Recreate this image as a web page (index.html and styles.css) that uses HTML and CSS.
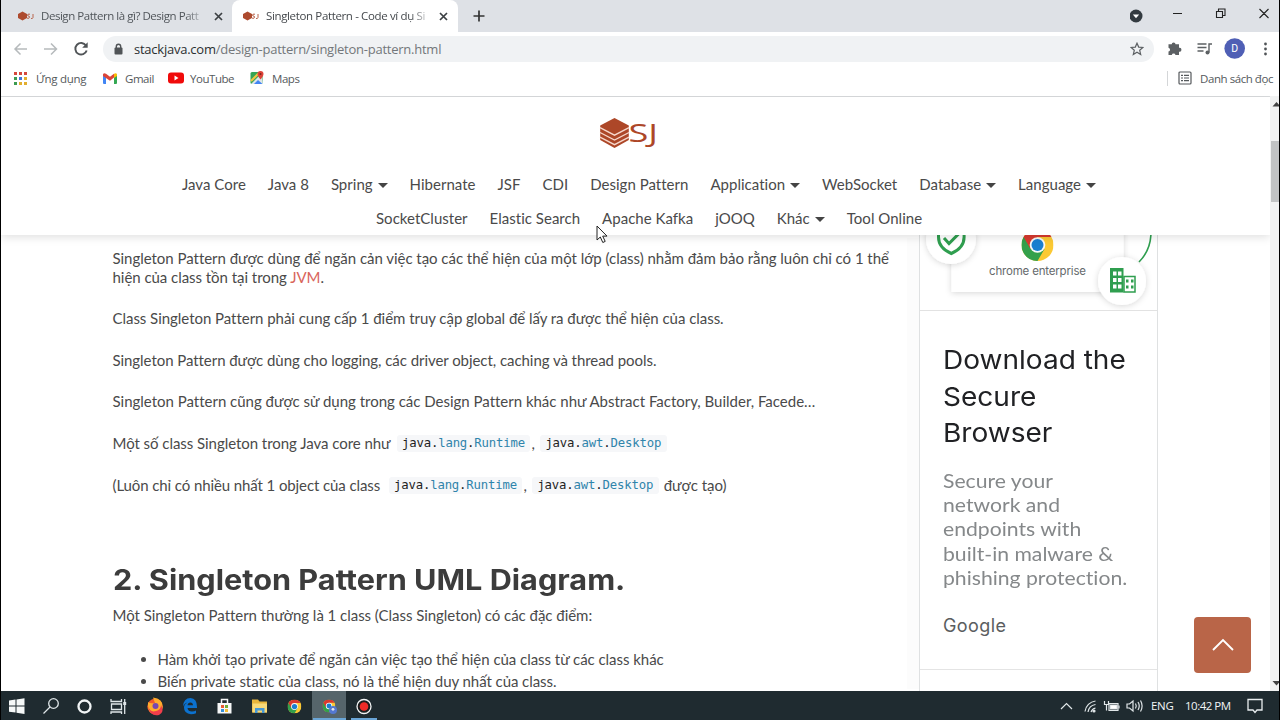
FILE: index.html
```html
<!DOCTYPE html>
<html lang="vi">
<head>
<meta charset="utf-8">
<title>Singleton Pattern - Code ví dụ Singleton</title>
<link rel="stylesheet" href="styles.css">
</head>
<body>
<svg width="0" height="0" class="defs">
  <symbol id="chrome" viewBox="0 0 32 32">
    <circle cx="16" cy="16" r="16" fill="#fbc934"/>
    <path d="M2.1 8A16 16 0 0 0 16 32l7-12-7-4z" fill="#34a04b"/>
    <path d="M2.1 8A16 16 0 0 1 29.9 8H16l-7 12z" fill="#d93a2f"/>
    <circle cx="16" cy="16" r="7.8" fill="#f6f8f8"/><circle cx="16" cy="16" r="6" fill="#1a7fd0"/>
  </symbol>
  <symbol id="fav" viewBox="0 0 16 10">
    <path d="M4.500 0.500L9 3v4L4.500 9.500 0 7V3z" fill="#ad4a2e"/>
    <path d="M12 3.200H10q-1.200 1 0 1.800h1q1.200 1.200 0 2.200H9M15 3v3.500q0 1.200-2 1" fill="none" stroke="#b8654d"/>
  </symbol>
</svg>
<div class="screen">
  <div class="tabs">
    <div class="tab">
      <svg class="fav" width="16" height="10"><use href="#fav"/></svg>
      <span class="tab-title title-a">Design Pattern là gì? Design Patt</span>
      <svg class="close" width="9" height="9" viewBox="0 0 9 9"><path d="M1 1l7 7M8 1L1 8"/></svg>
    </div>
    <div class="tab active">
      <svg class="fav" width="16" height="10"><use href="#fav"/></svg>
      <span class="tab-title title-b">Singleton Pattern - Code ví dụ Si</span>
      <svg class="close" width="9" height="9" viewBox="0 0 9 9"><path d="M1 1l7 7M8 1L1 8"/></svg>
    </div>
    <svg class="plus" width="12" height="12" viewBox="0 0 12 12"><path d="M6 0.500v11M0.500 6h11" stroke="#333" stroke-width="1.700"/></svg>
    <svg class="winctl" width="150" height="32" viewBox="1130 0 150 32" fill="none" stroke="#222" stroke-width="1.100">
      <circle cx="1136" cy="16" r="6.500" fill="#333a40" stroke="none"/><path d="M1132.800 14.500h6.400l-3.200 3.700z" fill="#fff" stroke="none"/>
      <path d="M1173 13.500h9M1216.500 11.500h6v6h-6zM1218.500 11v-2h6.500v6.500h-2M1259.500 9l9 9M1268.500 9l-9 9"/>
    </svg>
  </div>
  <div class="toolbar">
    <svg class="navbtns" width="90" height="34" viewBox="0 32 90 34" fill="none" stroke-width="1.500">
      <path d="M27 49H15.500M20.500 43.500L15 49l5.500 5.500M44 49h12M51 43.500l5.500 5.500-5.500 5.500" stroke="#b6babc"/>
      <path d="M86 45.500A5.800 5.800 0 1 0 86.700 50.500" stroke="#505457" stroke-width="1.900"/><path d="M87.700 42.300v5.500h-5.500z" fill="#505457"/>
    </svg>
    <div class="omnibox">
      <svg width="9" height="12" viewBox="0 0 9 12"><path d="M2.300 5V3.500a2.200 2.200 0 0 1 4.400 0V5" fill="none" stroke="#505457" stroke-width="1.400"/><rect x="0.500" y="4.500" width="8" height="7" rx="1" fill="#505457"/></svg>
      <span class="url"><b>stackjava.com</b>/design-pattern/singleton-pattern.html</span>
      <svg class="star" width="14" height="14" viewBox="0 0 14 14"><path d="M7 1.200l1.700 3.900 4.200.4-3.200 2.800 1 4.200L7 10.300l-3.700 2.200 1-4.200L1.100 5.500l4.200-.4z" fill="none" stroke="#5c6063" stroke-width="1.200"/></svg>
    </div>
    <svg class="exts" width="110" height="34" viewBox="1160 32 110 34">
      <path d="M1168.500 45.300h3.200a1.900 1.900 0 1 1 3.800 0h3.500v3.500a2 2 0 1 1 0 3.900v3.300h-3.500a1.900 1.900 0 0 0-3.700 0h-3.300v-3.400a2 2 0 0 0 0-3.900z" transform="translate(0 -1)" fill="#5c6063"/>
      <path d="M1197.500 44h9M1197.500 47.500h9M1197.500 51h6M1209 52.500v-8.500h3" fill="none" stroke="#5c6063" stroke-width="1.400"/><circle cx="1207.500" cy="52.500" r="2" fill="#5c6063"/>
      <circle cx="1234.700" cy="48.500" r="10.300" fill="#4f5fb5"/><text x="1231.300" y="52.300" font-size="10.500" fill="#fff" class="sans">D</text>
      <g fill="#505457"><circle cx="1265.500" cy="44" r="1.400"/><circle cx="1265.500" cy="49" r="1.400"/><circle cx="1265.500" cy="54" r="1.400"/></g>
    </svg>
  </div>
  <div class="bookmarks">
    <svg width="13" height="13" viewBox="0 0 13 13"><path d="M0 1.500h3m2 0h3m2 0h3" stroke="#d5483c" stroke-width="3"/><path d="M0 6.500h3" stroke="#3c9b50" stroke-width="3"/><path d="M5 6.500h3" stroke="#4274d8" stroke-width="3"/><path d="M10 6.500h3" stroke="#e2ae2f" stroke-width="3"/><path d="M0 11.500h3" stroke="#3c9b50" stroke-width="3"/><path d="M5 11.500h3m2 0h3" stroke="#e2ae2f" stroke-width="3"/></svg>
    <span class="bm b1">Ứng dụng</span>
    <svg width="14" height="11" viewBox="0 0 14 11"><path d="M0 1.500h3V11H1q-1 0-1-1z" fill="#4285f4"/><path d="M11 1.500h3V10q0 1-1 1h-2z" fill="#34a853"/><path d="M0 3V1.500Q.7-.7 3 .8l4 3 4-3V4.500L7 7.700 0 3z" fill="#dc4437"/><path d="M11 .8q2.500-1.400 3 .7V3l-3 2z" fill="#fbbc04"/></svg>
    <span class="bm b2">Gmail</span>
    <svg width="16" height="12" viewBox="0 0 16 12"><rect y="0.500" width="16" height="11" rx="3" fill="#f00a0a"/><path d="M6.500 3.500v5l4-2.500z" fill="#fff"/></svg>
    <span class="bm b3">YouTube</span>
    <svg width="14" height="14" viewBox="0 0 14 14"><rect x="0.500" y="1" width="12" height="12" rx="1.500" fill="#36a456"/><path d="M1 13L11 3l1.500 8v2z" fill="#dfe5e8"/><path d="M4 13l4-4 4.500 4z" fill="#4285f4"/><path d="M1 10L9 2" stroke="#f4c542" stroke-width="2"/><path d="M10.500 0a3 3 0 0 1 3 3q0 2-3 5.500-3-3.500-3-5.500a3 3 0 0 1 3-3z" fill="#dd4338"/><circle cx="10.500" cy="3" r="1" fill="#7b221d"/></svg>
    <span class="bm b4">Maps</span>
    <div class="reading">
      <svg width="14" height="14" viewBox="0 0 14 14" fill="none" stroke="#55595c" stroke-width="1.200"><rect x="1" y="1" width="12" height="12" rx="1"/><path d="M3 4.300h2m1 0h5M3 7h2m1 0h5M3 9.700h2m1 0h5"/></svg>
      <span class="bm b5">Danh sách đọc</span>
    </div>
  </div>

  <div class="viewport">
    <div class="page">
      <header>
        <svg class="logo" width="64" height="34" viewBox="598 116 64 34">
          <path d="M613.500 118l14.300 7.500v14.500L613.500 148l-14.300-8v-14.500z" fill="#ad4728"/>
          <path d="M599 127.700l14.500 7.500 14.500-7.500M599 132.500l14.500 7.500 14.500-7.500M599 137.200l14.500 7.500 14.500-7.500" fill="none" stroke="#f7d8cc" stroke-width="1.300"/>
          <text x="627.500" y="142" textLength="29.500" lengthAdjust="spacingAndGlyphs" class="logotext">SJ</text>
        </svg>
        <nav>
          <div class="navrow r1"><a>Java Core</a><a>Java 8</a><a class="dd">Spring</a><a>Hibernate</a><a>JSF</a><a>CDI</a><a>Design Pattern</a><a class="dd">Application</a><a>WebSocket</a><a class="dd">Database</a><a class="dd">Language</a></div>
          <div class="navrow r2"><a>SocketCluster</a><a>Elastic Search</a><a>Apache Kafka</a><a>jOOQ</a><a class="dd">Khác</a><a>Tool Online</a></div>
        </nav>
      </header>
      <div class="body">
        <article>
          <p><span class="l1">Singleton Pattern được dùng để ngăn cản việc tạo các thể hiện của một lớp (class) nhằm đảm bảo rằng luôn chỉ có 1 thể</span><br><span class="l2">hiện của class tồn tại trong <a class="link">JVM</a>.</span></p>
          <p class="l3">Class Singleton Pattern phải cung cấp 1 điểm truy cập global để lấy ra được thể hiện của class.</p>
          <p class="l4">Singleton Pattern được dùng cho logging, các driver object, caching và thread pools.</p>
          <p class="l5">Singleton Pattern cũng được sử dụng trong các Design Pattern khác như Abstract Factory, Builder, Facede…</p>
          <p class="codeline"><span class="l6">Một số class Singleton trong Java core như</span><code>java.<i>lang</i>.<i>Runtime</i></code><span class="comma">,</span><code>java.<i>awt</i>.<i>Desktop</i></code></p>
          <p class="codeline second"><span class="l7">(Luôn chỉ có nhiều nhất 1 object của class</span><code>java.<i>lang</i>.<i>Runtime</i></code><span class="comma">,</span><code>java.<i>awt</i>.<i>Desktop</i></code><span class="l8">được tạo)</span></p>
          <h2>2. Singleton Pattern UML Diagram.</h2>
          <p class="intro">Một Singleton Pattern thường là 1 class (Class Singleton) có các đặc điểm:</p>
          <ul>
            <li class="l9">Hàm khởi tạo private để ngăn cản việc tạo thể hiện của class từ các class khác</li>
            <li class="l10">Biến private static của class, nó là thể hiện duy nhất của class.</li>
          </ul>
        </article>
        <aside>
          <svg class="adpic" width="237" height="75" viewBox="920 235 237 75">
            <defs><filter id="sh" x="-20%" y="-30%" width="140%" height="160%"><feDropShadow dx="0" dy="1" stdDeviation="3" flood-color="#000" flood-opacity=".16"/></filter></defs>
            <rect x="951.500" y="200" width="172" height="92" fill="#fff" filter="url(#sh)"/>
            <circle cx="951" cy="239" r="25" fill="#fff" filter="url(#sh)"/>
            <path d="M938.500 228v9q0 11 12.800 16.500 12.800-5.500 12.800-16.500v-9" fill="none" stroke="#2f9e4f" stroke-width="3"/>
            <path d="M944 238l5 5.500 10-10" fill="none" stroke="#2f9e4f" stroke-width="3"/>
            <svg x="1021.500" y="229" width="32" height="32"><use href="#chrome"/></svg>
            <text x="989" y="274.500" textLength="97" class="ent">chrome enterprise</text>
            <path d="M1151 232q0 18-12 30" fill="none" stroke="#2f9e4f" stroke-width="1.600"/>
            <circle cx="1122" cy="281" r="24" fill="#fff" filter="url(#sh)"/>
            <path d="M1110 268h13.500v24.500H1110z" fill="#2f9e4f"/><path d="M1124 276.500h11v15.500h-11z" fill="#fff" stroke="#2f9e4f" stroke-width="1.500"/>
            <path d="M1113 271.500h3.500v4H1113zm5 0h3.500v4H1118zM1113 278h3.500v4H1113zm5 0h3.500v4H1118zM1113 284.500h3.500v4H1113zm5 0h3.500v4H1118z" fill="#fff"/>
            <path d="M1126 279.500h2.500v3H1126zm5 0h2.500v3H1131zM1126 285.500h2.500v3H1126zm5 0h2.500v3H1131z" fill="#2f9e4f"/>
          </svg>
          <div class="adtext">
            <div class="adh">Download the<br>Secure<br>Browser</div>
            <div class="add">Secure your<br>network and<br>endpoints with<br>built-in malware &amp;<br>phishing protection.</div>
            <div class="brand">Google</div>
          </div>
        </aside>
      </div>
    </div>
    <div class="scroll"><svg width="9" height="595" viewBox="0 0 9 595"><rect x="1" y="45" width="8" height="61" fill="#c1c3c4"/><path d="M2.500 10.500L6.500 6l4 4.500zM2.500 585L6.500 589.500l4-4.500z" fill="#444"/></svg></div>
    <div class="totop"><svg width="24" height="14" viewBox="0 0 24 14"><path d="M2 12L12 2l10 10" fill="none" stroke="#fff" stroke-width="1.900"/></svg></div>
  </div>

  <div class="taskbar">
    <svg width="400" height="29" viewBox="0 691 400 29">
      <rect x="312" y="691" width="34" height="29" fill="#56656b"/><path d="M313 719h33M351 719h26" stroke="#6aa5d6" stroke-width="2"/>
      <path d="M9 700.500l6.500-.9v6H9zM16.500 699.400l8-1.100v7.300h-8zM9 706.600h6.500v6L9 711.700zM16.500 706.600h8v7.300l-8-1.200z" fill="#f5f8f8"/>
      <g fill="none" stroke="#dfe6e8" stroke-width="1.300"><circle cx="53.500" cy="703.500" r="4.800"/><path d="M50 707l-6.500 6.500"/><circle cx="84.500" cy="706.500" r="6" stroke="#f1f4f5" stroke-width="2.300"/>
      <path d="M111 699v2.500h10.500V699M111.500 704h10v5.500h-10zM111 714v-2h10.500v2M124.700 699v15"/><path d="M124.700 702v3" stroke-width="3"/></g>
      <circle cx="155" cy="706.500" r="7.700" fill="#f15a2b"/><path d="M148 702q2 2 7 1l-2-5.500q10 1 9.700 9.500-.5 7-8 7-6.500-1-6.700-8z" fill="#ffac2c"/><path d="M148 706q2 7 8 5 5-1 5-6 4 7-2 10-9 2-11-9z" fill="#f13e4b"/><circle cx="155.500" cy="706" r="3" fill="#7847af"/>
      <path d="M183 706.500q.5-8.500 7.500-8.500 6.500.5 6.500 9v1h-9.500q.5 3.500 4.500 3.500 2.500 0 4-1v2.700q-2 1-5 1-7-.5-7-6.700 0-3.500 3.500-5-3 .5-4.500 4zM187.500 705.300h5.500q-.2-2.800-2.600-2.800-2.500 0-2.900 2.800z" fill="#0c72cf" fill-rule="evenodd"/>
      <path d="M217.500 703h14v10.500h-14z" fill="#f6f8f8"/><path d="M221.500 703v-3.500h6v3.500" fill="none" stroke="#f6f8f8" stroke-width="1.500"/><path d="M221 705h3v3h-3z" fill="#e75c35"/><path d="M225 705h3v3h-3z" fill="#74ad35"/><path d="M221 709h3v3h-3z" fill="#3590d8"/><path d="M225 709h3v3h-3z" fill="#f4bc34"/>
      <path d="M252 699.500h6l1.500 2h7.500v11h-15z" fill="#e8b53b"/><path d="M252.500 703.500h14.500v9h-14.500z" fill="#f7d979"/><path d="M255 713v-5h9.500v5h-2.500v-2.500h-4.500v2.500z" fill="#4698d5"/>
      <svg x="287.500" y="699.500" width="14" height="14"><use href="#chrome"/></svg><svg x="322.500" y="699.500" width="13" height="13"><use href="#chrome"/></svg><circle cx="333" cy="710" r="4" fill="#5478d0"/><circle cx="333" cy="709.300" r="1.400" fill="#e5e8ef"/>
      <circle cx="364" cy="706.500" r="7" fill="#1a1d1e" stroke="#f2f4f4" stroke-width="1.300"/><circle cx="364" cy="706.500" r="4.300" fill="#ee2b27"/>
    </svg>
    <div class="tray">
      <svg width="86" height="29" viewBox="1058 691 86 29" fill="none" stroke="#e1e7e9" stroke-width="1.200">
        <path d="M1060 709l5.500-5.500L1071 709"/><path d="M1084 711.500a12 12 0 0 1 10.500-10.500M1087 712a9 9 0 0 1 7.500-7.500M1090 712a6 6 0 0 1 4.500-4"/><circle cx="1093" cy="711" r="1" fill="#fff"/>
        <path d="M1108 703.500h9v7h-9z"/><path d="M1109.500 705h6.500v4h-6.500z" fill="#fff"/><path d="M1118 705.500v3M1103.500 701v3.500h4V701M1105.500 704.500v6"/>
        <path d="M1126 704h2.500l3.500-3v10l-3.500-3h-2.500zM1134.500 703.500q1.500 2.500 0 5M1137 702q2.500 4 0 8M1139.500 700.500q3.200 5.500 0 11"/>
      </svg>
      <span class="lang">ENG</span><span class="clock">10:42 PM</span>
      <svg class="note" width="16" height="16" viewBox="0 0 16 16"><path d="M1 1.500h14v10.500h-5l-2 2.500L6 12H1z" fill="none" stroke="#e8edef" stroke-width="1.300"/></svg>
    </div>
  </div>
  <svg class="cursor" width="12" height="19" viewBox="0 0 12 19"><path d="M1 1v14l3.300-3 2.500 5.500 2.400-1.100-2.500-5.300h4.300z" fill="#fff" stroke="#222" stroke-width="1"/></svg>
</div>
</body>
</html>
```
FILE: styles.css
```css
* { box-sizing: border-box; }
body { margin: 0; background: #000; }
svg { display: block; flex: none; }
.defs { position: absolute; }
.screen { position: relative; width: 1280px; height: 720px; overflow: hidden; display: flex; flex-direction: column; border-left: 1px solid #000; border-right: 1px solid #000; font-family: "Open Sans", "Noto Sans", sans-serif; background: #fff; }
.sans { font-family: Roboto, sans-serif; }
.tabs { height: 32px; background: #dee1e6; display: flex; align-items: center; flex: none; }
.tab { display: flex; align-items: center; height: 32px; width: 231px; padding-left: 17px; }
.tab.active { background: #fff; width: 226px; border-radius: 8px 8px 0 0; padding-left: 11px; }
.fav { margin-right: 7px; }
.tab-title { font-size: 11.5px; letter-spacing: -.36px; color: #50555a; white-space: nowrap; width: 165px; position: relative; top: -1px; -webkit-mask-image: linear-gradient(90deg, #000 87%, transparent 101%); mask-image: linear-gradient(90deg, #000 87%, transparent 101%); }
.title-a { letter-spacing: -.46px; }
.title-b { color: #44484c; }
.close { margin-left: 8px; stroke: #3c4043; stroke-width: 1.7; }
.plus { margin-left: 15px; }
.winctl { margin-left: auto; margin-right: -1px; }
.toolbar { height: 34px; display: flex; align-items: center; flex: none; }
.navbtns { margin-left: -1px; }
.omnibox { margin-left: 13px; width: 1051px; height: 26px; border-radius: 13px; background: #f0f2f4; display: flex; align-items: center; padding: 0 10px 0 11px; }
.url { font-size: 13px; letter-spacing: -.24px; color: #73777a; margin-left: 11px; white-space: nowrap; }
.url b { font-weight: 400; color: #2c2f31; }
.star { margin-left: auto; }
.exts { margin-left: 6px; }
.bookmarks { height: 31px; display: flex; align-items: center; padding: 0 0 6px 13px; border-bottom: 1px solid #dcdee0; flex: none; }
.bm { font-size: 11.5px; letter-spacing: -.45px; color: #55595c; white-space: nowrap; }
.b1 { width: 67px; margin-left: 9px; letter-spacing: -.3px; }
.b2 { width: 43px; margin-left: 8px; }
.b3 { width: 60px; margin-left: 6px; }
.b4 { margin-left: 8px; }
.reading { margin-left: auto; display: flex; align-items: center; gap: 8px; height: 15px; border-left: 1px solid #d4d6d8; padding: 0 6px 0 10px; }
.viewport { position: relative; height: 595px; margin-top: -1px; display: flex; flex: none; overflow: hidden; }
.page { flex: 1; display: flex; flex-direction: column; overflow: hidden; font-family: Lato, sans-serif; font-variant-ligatures: none; color: #4a4a4a; }
header { height: 138px; margin-top: 1px; flex: none; background: #fff; position: relative; z-index: 2; box-shadow: 0 2px 9px rgba(0,0,0,.13); padding-top: 19px; }
.logo { margin-left: 598px; }
.logotext { font: 500 26px "Open Sans", sans-serif; fill: #ad4728; }
nav { margin-top: 17px; font-size: 15px; line-height: 34px; }
.navrow { display: flex; gap: 22px; height: 34px; white-space: nowrap; letter-spacing: .02px; }
.r1 { margin-left: 181px; }
.r2 { margin-left: 375px; }
.dd::after { content: ""; display: inline-block; border: 5px solid transparent; border-top-color: #444; border-bottom: 0; margin-left: 5px; vertical-align: 2px; }
.body { flex: 1; display: flex; overflow: hidden; }
article { width: 904px; flex: none; padding: 14px 0 0 111.5px; font-size: 15px; line-height: 19px; white-space: nowrap; }
p { margin: 0 0 22.3px; }
.l1 { letter-spacing: -.032px; }
.l2 { letter-spacing: -.04px; }
.l3 { letter-spacing: -.037px; }
.l4 { letter-spacing: -.055px; }
.l5 { letter-spacing: -.008px; }
.l6 { letter-spacing: -.045px; width: 280px; }
.l7 { letter-spacing: -.1px; width: 272px; }
.intro { letter-spacing: -.035px; }
.l9 { letter-spacing: -.035px; }
.l10 { letter-spacing: -.065px; }
.link { color: #d9655b; }
.codeline { display: flex; height: 20px; align-items: center; margin-bottom: 22px; }
code { font: 12.3px/17px "DejaVu Sans Mono", monospace; letter-spacing: -.17px; color: #222; background: #f6f7f9; padding: 0 5.5px; border-radius: 3px; margin-left: 4px; }
code i { font-style: normal; color: #2f84ab; }
.comma { margin: 0 1px; }
.l8 { margin-left: 5px; }
h2 { font: 700 28px/36px Inter, sans-serif; color: #3c3c3c; margin: 67px 0 8px; width: 480px; transform: scaleX(1.095); transform-origin: left; }
.intro { margin-bottom: 22.5px; }
ul { margin: 0; padding-left: 45px; line-height: 22.6px; }
aside { width: 239px; margin-left: 14px; border: 1px solid #dfe1e2; border-width: 0 1px; position: relative; height: 457px; box-shadow: -15px 0 0 -3px #fcfcfc; }
.adpic { border-bottom: 1px solid #e2e2e2; height: 76px; }
.adtext { height: 359px; padding: 31px 0 0 23px; border-bottom: 1px solid #e4e4e4; font-family: Inter, sans-serif; white-space: nowrap; }
.adh { font-size: 26px; line-height: 36.5px; color: #202124; width: 175px; transform: scaleX(1.078); transform-origin: left; }
.add { font-size: 19.5px; line-height: 24.4px; color: #85888a; margin-top: 17px; font-family: Lato, sans-serif; width: 175px; transform: scaleX(1.085); transform-origin: left; }
.brand { font-size: 18px; line-height: 24px; margin-top: 23px; color: #5a5d60; letter-spacing: .4px; }
.ent { font: 11.5px Inter, sans-serif; fill: #65696c; }
.scroll { width: 9px; background: #f1f2f2; flex: none; }
.totop { position: absolute; left: 1193px; top: 521px; width: 57px; height: 56px; border-radius: 4px; background: #b96548; display: flex; align-items: center; justify-content: center; }
.taskbar { height: 30px; flex: none; background: #1f2b30; display: flex; justify-content: space-between; margin-left: -1px; color: #f1f4f5; }
.tray { display: flex; align-items: center; font-size: 11.5px; height: 29px; padding-right: 16px; }
.lang { margin-left: 6px; width: 34px; letter-spacing: -.3px; }
.clock { width: 62px; white-space: nowrap; letter-spacing: -.5px; }
.cursor { position: absolute; left: 595px; top: 225px; z-index: 5; }
```
